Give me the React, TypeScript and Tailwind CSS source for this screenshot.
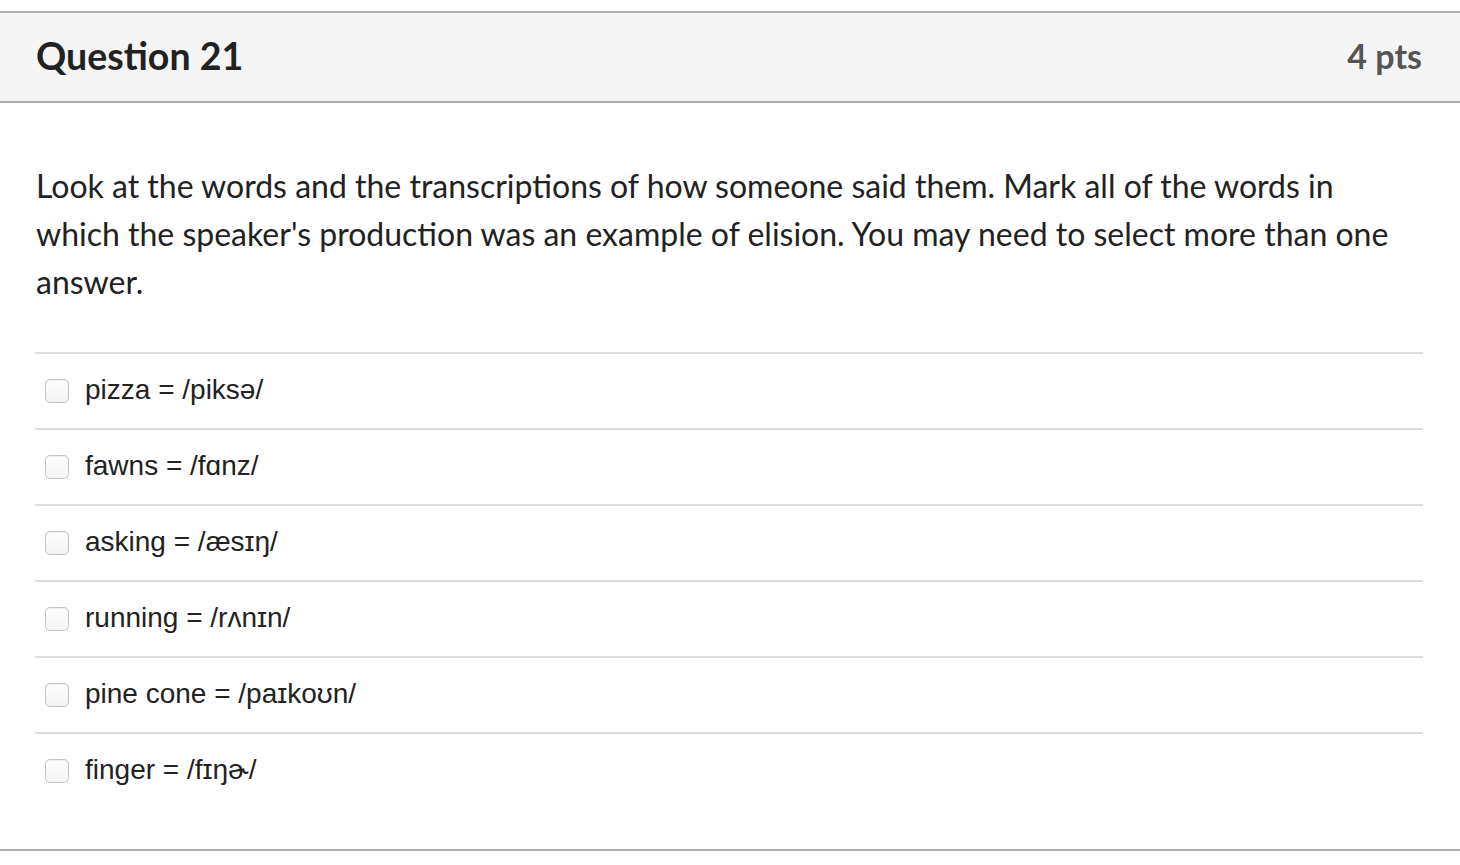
import React from "react";

const answers = [
  "pizza = /piksə/",
  "fawns = /fɑnz/",
  "asking = /æsɪŋ/",
  "running = /rʌnɪn/",
  "pine cone = /paɪkoʊn/",
  "finger = /fɪŋɚ/",
];

export default function App() {
  return (
    <div className="w-[1460px] h-[865px] bg-white overflow-hidden pt-[11px]">
      <div className="border-t-2 border-b-2 border-[#adadad] bg-[#f5f5f5] h-[92px] flex items-center justify-between pl-[36px] pr-[38px]" style={{ fontFamily: "Lato, sans-serif" }}>
        <div className="text-[37.5px] font-bold text-[#222] leading-none pb-[2px]">Question 21</div>
        <div className="text-[34px] font-bold text-[#555] leading-none pb-[2px]">4 pts</div>
      </div>
      <div className="px-[36px] pt-[59px]">
        <div className="w-[1366px] text-[32px] leading-[48px] text-[#222]" style={{ fontFamily: "Lato, sans-serif" }}>
          Look at the words and the transcriptions of how someone said them. Mark all of the words in which the speaker's production was an example of elision. You may need to select more than one answer.
        </div>
        <div className="mt-[46px] mr-[1px]">
          {answers.map((a, i) => (
            <div
              key={i}
              className="border-t-2 border-[#dddddd] flex items-center h-[76px] pl-[10px] -ml-[1px]"
            >
              <div className="w-[24px] h-[24px] rounded-[5px] border-[1.5px] border-[#c4c4c4] bg-gradient-to-b from-white to-[#f4f4f4] shadow-[inset_0_1px_1px_rgba(0,0,0,0.06)]" />
              <div className="ml-[16px] text-[28px] text-[#222] leading-none pb-[2px]" style={{ fontFamily: "'Liberation Sans', Arial, sans-serif" }}>
                {a}
              </div>
            </div>
          ))}
        </div>
      </div>
      <div className="mt-[41px] border-t-2 border-[#adadad]" />
    </div>
  );
}
